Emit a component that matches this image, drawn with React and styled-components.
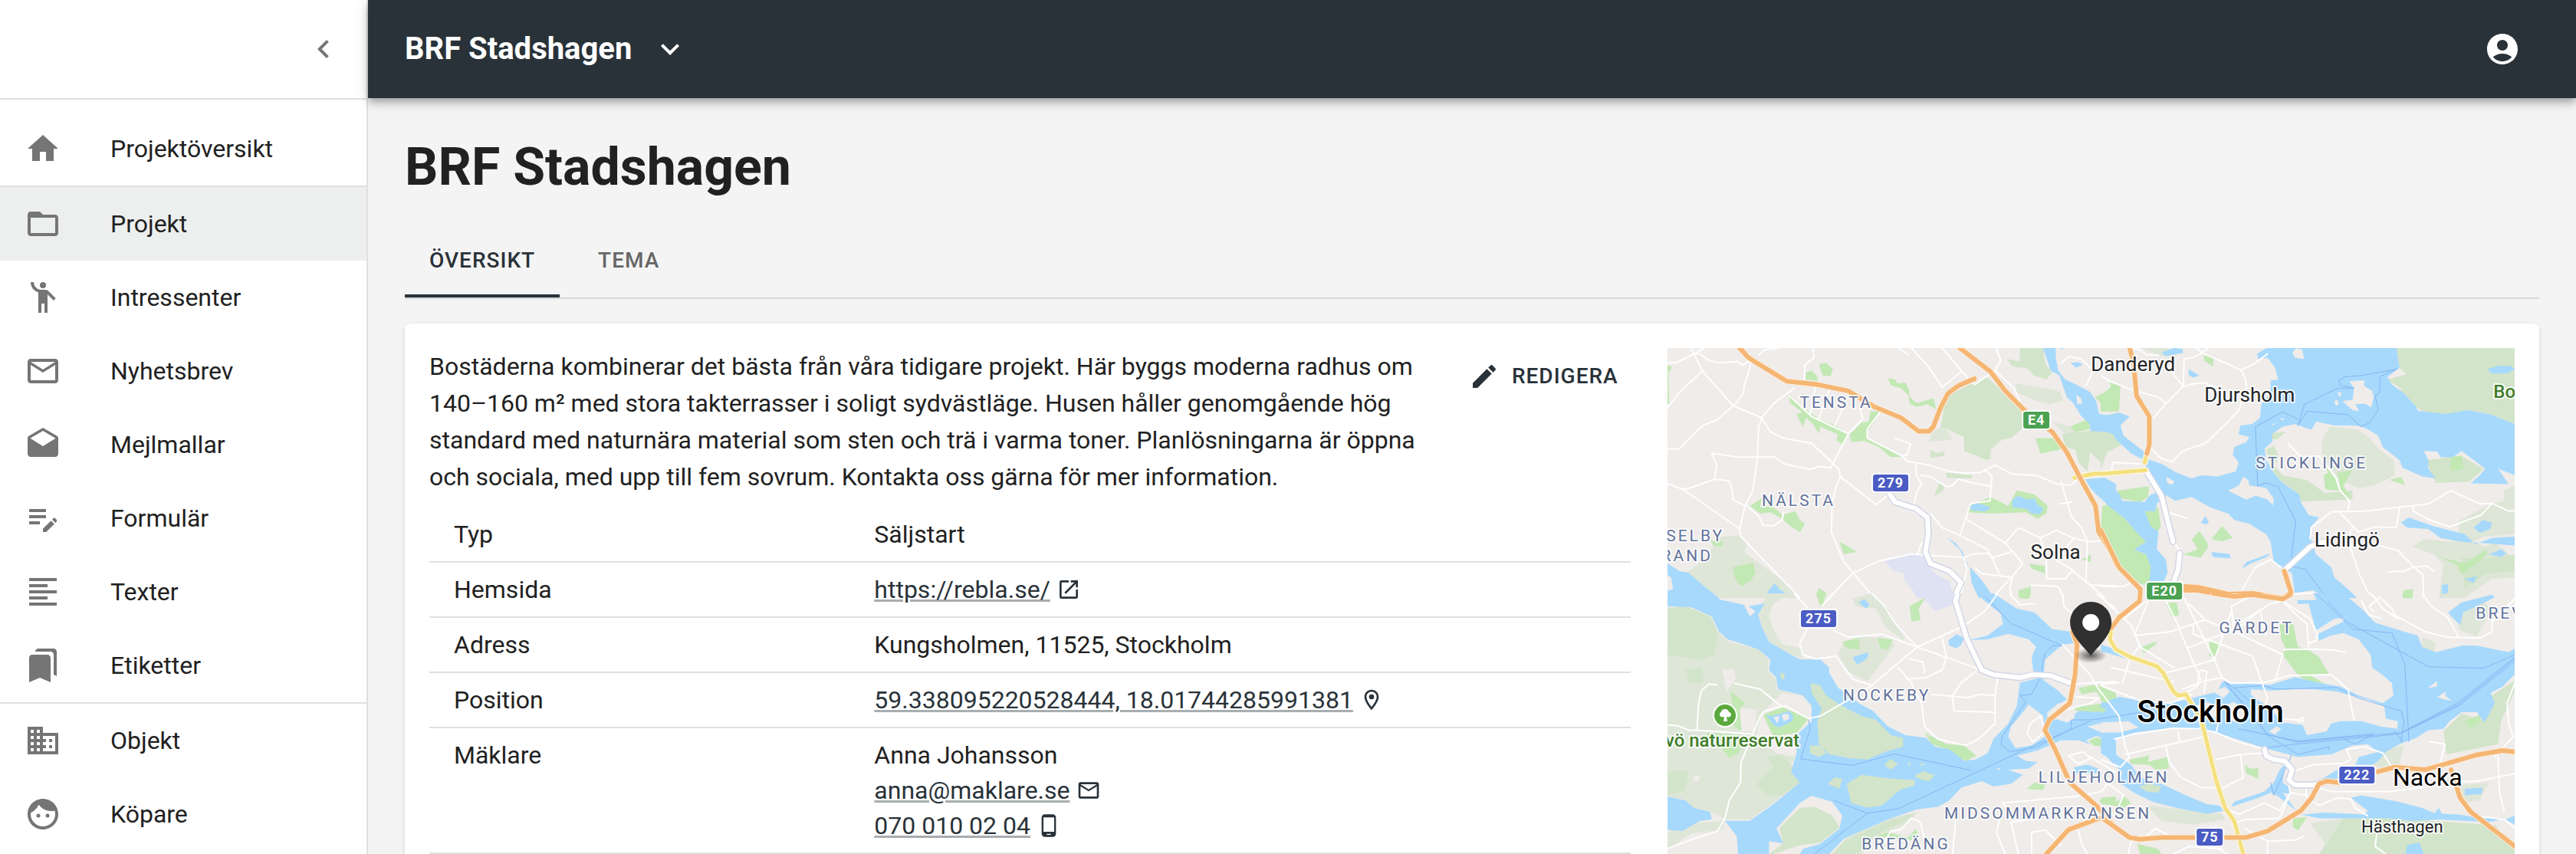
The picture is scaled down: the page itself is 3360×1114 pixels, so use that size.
import React from 'react';
import styled, { createGlobalStyle } from 'styled-components';
import {
  MdAccountCircle,
  MdBookmarks,
  MdBusiness,
  MdChevronLeft,
  MdDrafts,
  MdEdit,
  MdEditNote,
  MdEmojiPeople,
  MdExpandMore,
  MdFace,
  MdFolderOpen,
  MdFormatAlignLeft,
  MdHome,
  MdMailOutline,
  MdOpenInNew,
  MdOutlineLocationOn,
  MdPhoneAndroid,
} from 'react-icons/md';

const GlobalStyle = createGlobalStyle`
  * {
    box-sizing: border-box;
  }

  body {
    margin: 0;
    background: #f4f4f4;
    color: #212121;
    font-family: Roboto, 'Liberation Sans', sans-serif;
    font-size: 32px;
    line-height: 48px;
  }
`;

const Shell = styled.div`
  display: flex;
  height: 100vh;
  overflow: hidden;
`;

// Sidebar
const Sidebar = styled.aside`
  flex: 0 0 480px;
  background: #fff;
  border-right: 2px solid #e0e0e0;
`;

const SidebarTop = styled.div`
  display: flex;
  align-items: center;
  justify-content: flex-end;
  height: 130px;
  padding-right: 8px;
  border-bottom: 2px solid #e0e0e0;
`;

const IconButton = styled.button`
  display: flex;
  padding: 24px;
  border: 0;
  background: none;
  color: ${(props) => props.$color};
  font-size: 48px;
  cursor: pointer;
`;

const NavGroup = styled.ul`
  margin: 0;
  padding: ${(props) => (props.$first ? '16px 0 0' : '0')};
  list-style: none;
  border-bottom: ${(props) => (props.$last ? '0' : '2px solid #e0e0e0')};
`;

const NavLink = styled.a`
  display: flex;
  align-items: center;
  gap: 64px;
  height: 96px;
  padding: 0 32px;
  background: ${(props) => (props.$active ? '#edefee' : 'transparent')};
  color: #212121;
  text-decoration: none;

  svg {
    color: #757575;
    font-size: 48px;
  }
`;

// Main column
const Main = styled.div`
  flex: 1;
  min-width: 0;
`;

const Header = styled.header`
  position: relative;
  display: flex;
  align-items: center;
  justify-content: space-between;
  height: 128px;
  padding: 0 48px;
  background: #293239;
  color: #fff;
  box-shadow:
    0 4px 8px -2px rgba(0, 0, 0, 0.2),
    0 8px 10px rgba(0, 0, 0, 0.14),
    0 2px 20px rgba(0, 0, 0, 0.12);
`;

const ProjectSwitch = styled.button`
  display: flex;
  align-items: center;
  gap: 26px;
  padding: 0;
  border: 0;
  background: none;
  color: inherit;
  font: 700 40px/48px Roboto, sans-serif;
  cursor: pointer;

  svg {
    font-size: 48px;
  }
`;

const Content = styled.main`
  padding: 48px;
`;

const Title = styled.h1`
  margin: 0 0 32px;
  font-size: 68px;
  font-weight: 700;
  line-height: 84px;
`;

const Tabs = styled.div`
  display: flex;
  margin-bottom: 32px;
  border-bottom: 2px solid #d7d7d7;
`;

const Tab = styled.button`
  min-width: 180px;
  height: 96px;
  padding: 4px 32px 0;
  border: 0;
  border-bottom: 4px solid ${(props) => (props.$active ? '#293239' : 'transparent')};
  background: none;
  color: ${(props) => (props.$active ? '#293239' : '#666')};
  font: 500 28px/36px Roboto, sans-serif;
  letter-spacing: 1px;
  text-transform: uppercase;
  cursor: pointer;
`;

const Card = styled.section`
  display: grid;
  grid-template-columns: repeat(12, 1fr);
  column-gap: 48px;
  padding: 32px;
  border-radius: 8px;
  background: #fff;
  box-shadow:
    0 4px 2px -2px rgba(0, 0, 0, 0.1),
    0 2px 2px rgba(0, 0, 0, 0.08),
    0 2px 6px rgba(0, 0, 0, 0.1);
`;

const Details = styled.div`
  grid-column: span 7;
`;

const Intro = styled.div`
  display: flex;
  align-items: flex-start;
  gap: 32px;
  margin-bottom: 16px;

  p {
    flex: 1;
    margin: 0;
  }
`;

const EditButton = styled.button`
  display: flex;
  align-items: center;
  gap: 16px;
  height: 73px;
  padding: 0 16px 0 8px;
  border: 0;
  background: none;
  color: #293239;
  font: 500 28px/48px Roboto, sans-serif;
  letter-spacing: 1px;
  text-transform: uppercase;
  cursor: pointer;

  svg {
    font-size: 40px;
  }
`;

const InfoTable = styled.table`
  width: 100%;
  border-collapse: separate;
  border-spacing: 0;
  line-height: 46px;

  th,
  td {
    padding: 12px 32px;
    border-bottom: 2px solid #e0e0e0;
    font-weight: 400;
    text-align: left;
    vertical-align: top;
  }

  th {
    width: 35%;
  }
`;

const ValueLine = styled.div`
  display: flex;
  align-items: center;
  gap: 8px;
  color: #293239;

  a {
    color: inherit;
    text-decoration-color: rgba(41, 50, 57, 0.4);
    text-decoration-thickness: 3px;
    text-underline-offset: 2px;
  }
`;

// Map
const MapFrame = styled.div`
  grid-column: span 5;
  position: relative;
  overflow: hidden;
  background: #efecea;
`;

const MapCanvas = styled.svg`
  position: absolute;
  inset: 0;
  width: 100%;
  height: 100%;
`;

const Area = styled.polygon`
  fill: ${(props) => props.$fill};
`;

const Line = styled.polyline`
  fill: none;
  stroke: ${(props) => props.$color};
  stroke-width: ${(props) => props.$width}px;
  stroke-linejoin: round;
  stroke-linecap: round;
  vector-effect: non-scaling-stroke;
`;

const Place = styled.text`
  fill: ${(props) => props.$color};
  stroke: rgba(255, 255, 255, 0.8);
  stroke-width: 4px;
  stroke-linejoin: round;
  paint-order: stroke;
  font-family: Roboto, sans-serif;
  font-size: ${(props) => props.$size}px;
  font-weight: ${(props) => props.$weight || 400};
  letter-spacing: ${(props) => (props.$spaced ? '3px' : 'normal')};
`;

const ShieldText = styled.text`
  fill: #fff;
  font-family: Roboto, sans-serif;
  font-size: 18px;
  font-weight: 700;
  letter-spacing: 1px;
  text-anchor: middle;
`;

const areaLayers = [
  ['light', '#dee6d8'],
  ['wood', '#d2e4c9'],
  ['ground', '#efecea'],
  ['industry', '#dee2f3'],
  ['park', '#c2e8b4'],
  ['water', '#a7d9fc'],
  ['island', '#efecea'],
  ['islandWood', '#d2e4c9'],
  ['islandPark', '#c2e8b4'],
];

const lineLayers = [
  ['ferry', '#86b5f2', 1],
  ['road', '#fff', 2],
  ['motorway', '#d3d6e6', 9],
  ['motorway', '#fff', 6],
  ['yellow', '#fbf5df', 8],
  ['yellow', '#f4e07e', 5],
  ['orange', '#fbeee0', 8],
  ['orange', '#f5b673', 6],
];

const tiles = [
  {
    x: -15,
    y: -14,
    width: 600,
    light: [
      '220,780 285,775 312,800 300,840 370,900 430,950 490,1020 215,1020 160,970 105,920 165,870 200,810',
      '930,410 940,370 975,350 990,360 1010,400',
      '1225,180 1350,205 1375,210 1388,250 1340,262 1300,250 1230,215',
      '1350,330 1410,350 1440,370 1400,385',
    ],
    wood: [
      '1240,42 1320,42 1325,100 1350,140 1330,165 1290,150 1265,120 1215,115 1195,85 1240,95',
      '1000,225 1125,155 1180,210 1250,290 1250,355 1210,395 1180,400 1140,440 1140,475 1125,480 1085,460 1050,445 1050,390 985,355 970,355 980,290 975,265',
      '1385,380 1440,370 1560,360 1560,440 1515,455 1515,490 1480,450 1470,525 1440,490 1430,440 1395,430',
      '935,440 955,455 985,445 980,465 935,472',
      '990,530 1080,540 1075,552 990,550',
      '965,570 985,580 975,605 948,620',
    ],
    industry: ['778,877 870,850 915,850 945,920 1000,955 1015,1020 890,1020 875,990 845,950 848,925 810,915'],
    park: [
      '39,108 55,118 42,140 45,260 39,262',
      '510,140 530,130 550,155 550,172 510,165',
      '555,105 580,100 603,125 595,152 568,150',
      '455,222 490,265 555,320 610,345 655,378 640,422 615,405 620,380 560,350 555,378 535,340 512,315 500,350 478,300 500,295 455,255',
      '730,290 765,290 745,330 720,370 720,395 770,425 835,468 800,468 760,430 710,405 665,410 660,380 700,335 725,330',
      '790,160 815,165 822,180 850,178 862,205 865,235 890,258 945,238 955,282 925,262 890,272 865,262 860,225 835,200 800,188',
      '1495,235 1530,215 1568,175 1568,290 1515,290 1515,255',
      '1410,350 1475,320 1478,360 1430,370',
      '1293,395 1370,395 1378,440 1310,455',
      '1065,660 1140,625 1200,660 1230,600 1290,615 1335,660 1330,690 1300,710 1260,685 1140,690 1065,685',
      '320,660 360,630 355,665 395,660 430,695 475,680 490,715 508,730 490,762 460,740 430,710 390,685 355,690',
      '1568,660 1545,660 1520,705 1520,770 1568,830',
      '625,800 650,815 685,840 640,848',
      '262,900 330,882 340,920 325,950 290,975 270,945',
      '185,795 230,800 225,820 195,815',
      '545,1010 555,982 580,1000 575,1020',
      '1235,990 1278,975 1275,1020 1235,1015',
      '1272,885 1325,895 1325,925 1280,905',
      '1450,870 1483,850 1480,880',
    ],
    water: [
      '1318,42 1362,42 1362,75 1370,130 1395,165 1440,190 1480,215 1500,250 1510,300 1568,310 1568,400 1540,370 1480,368 1478,340 1450,310 1420,255 1400,235 1375,150 1345,130 1330,80',
      '1412,100 1440,98 1455,108 1430,118',
      '1375,42 1390,42 1384,48',
      '1462,555 1530,550 1568,575 1568,680 1540,655 1500,615 1480,590',
      '1070,660 1095,648 1140,665 1125,682 1075,677',
      '1215,635 1235,620 1265,635 1290,630 1300,655 1320,668 1310,692 1280,690 1260,670 1215,665',
      '39,885 80,915 110,920 160,970 215,1020 39,1020',
      '378,1000 405,962 420,985 450,1008 415,1005 395,1015',
      '993,785 1020,805 1045,840 1055,880 1075,905 1110,950 1140,1000 1145,1020 1100,1020 1085,985 1075,960 1070,900 1050,865 1035,830',
    ],
    island: ['1432,225 1448,238 1452,260 1436,262', '39,930 52,940 58,985 39,992'],
    road: [
      '39,100 68,100 130,65 165,42',
      '120,42 158,132 263,268 360,315 390,370 435,395 530,415 600,490 625,520 628,545 750,655 790,618',
      '130,65 150,65 180,90 210,100 278,95 295,110 320,90 322,110 300,190 298,220 265,268 205,325 160,345 115,395 80,437 39,437',
      '158,132 85,210 39,275',
      '350,70 370,50 415,42',
      '190,455 285,470 405,468 435,495 525,517 560,505 595,512',
      '190,455 207,500 200,555 105,595 90,590',
      '39,572 95,597 285,750 290,780 470,995 490,1020',
      '200,555 250,562 260,600 262,635 303,660',
      '470,200 400,260 360,315 350,350 345,480 330,600 303,660 285,750',
      '655,378 595,512',
      '310,660 350,700 365,735 400,738 430,715 435,685',
      '535,42 538,80 507,110 505,170',
      '455,230 530,310 655,378 705,320 695,280',
      '545,190 525,300',
      '590,205 555,320',
      '640,270 610,345',
      '765,290 720,360 720,395 840,465 855,485 930,500 1000,525 1050,532 1105,530 1155,500 1215,535 1295,540 1370,575 1410,580 1440,555',
      '815,395 868,418 855,460 840,465',
      '885,492 888,540 905,575 890,600 880,650',
      '900,540 935,545 990,585 1010,580 1030,555 1080,570 1138,582',
      '1120,518 1145,545 1138,640 1072,650 1055,710 1035,775',
      '628,545 610,600 600,650 598,765 640,880 672,922 715,980 740,1020',
      '590,1020 672,922 760,875 870,848 1050,862 1080,848 1130,845 1150,862 1210,840',
      '905,685 940,695 975,745 1035,775 1130,830 1170,925',
      '905,805 890,850',
      '1055,710 1190,805 1250,885 1215,935 1145,1020',
      '1190,805 1235,745 1310,785 1365,755 1420,785 1475,800 1545,795',
      '1380,565 1395,620 1415,700 1450,745 1470,800 1465,960',
      '1375,652 1415,645',
      '1310,785 1330,870 1332,945 1395,945 1420,910 1360,870 1425,785',
      '1050,865 1060,910 1040,1000',
      '1090,905 1110,925 1215,940 1205,980 1215,1020',
      '825,42 860,68',
      '870,42 925,110 975,195 1040,135',
      '975,42 1040,130 1065,165 1085,185 1155,130 1175,90 1158,42',
      '1155,130 1220,200 1255,285',
      '1380,100 1410,75 1450,85 1490,130 1465,190',
      '1415,910 1480,970 1568,972',
      '1480,970 1530,1020',
      '1280,970 1370,975 1390,1020',
    ],
    motorway: ['795,612 815,645 885,670 925,705 928,770 918,840 935,885 1000,915 1040,960 1015,1020'],
    yellow: ['1425,550 1490,535 1568,528'],
    orange: [
      '285,42 315,80 400,140 445,172 550,185 655,210 740,270 835,315 895,368 930,368 945,350 970,275 995,220 1030,190 1085,162',
      '1035,42 1140,135 1190,210 1255,285 1350,370 1400,450 1450,560 1498,660 1508,760 1550,840 1568,885',
    ],
  },
  {
    x: 565,
    y: -14,
    width: 620,
    light: [
      '135,42 220,42 250,75 200,75',
      '730,400 755,350 850,362 885,395 920,440 965,480 970,540 900,580 850,590 790,560 730,470',
      '1366,580 1330,600 1330,640 1270,660 1180,720 1180,760 1230,800 1260,780 1366,770',
      '1028,820 1065,790 1150,800 1200,790 1270,820 1300,800 1366,870 1366,940 1290,945 1200,1020 1115,1020 1130,890 1100,850',
    ],
    wood: [
      '975,42 1366,42 1366,340 1280,300 1210,285 1140,302 1060,290 1040,270 1000,220 960,210 995,205 945,165 1010,145 985,120',
      '0,370 45,380 70,420 20,450 0,520',
      '545,440 570,425 590,470 570,500 600,540 680,560 740,610 830,600 830,635 660,642 655,615 600,570 565,520',
      '560,375 610,370 580,400 560,400',
      '1075,480 1120,475 1160,465 1190,465 1262,515 1215,565 1105,570 1085,520',
      '1190,860 1240,870 1366,850 1366,915 1270,925 1200,985',
    ],
    park: [
      '5,660 20,655 80,710 115,760 150,800 110,830 150,850 165,900 185,935 160,975 120,960 75,910 0,750',
      '55,600 160,583 155,625 130,645 65,630',
      '140,685 190,665 198,740 185,765 165,740',
      '0,220 40,240 30,175 65,190 60,290 0,290',
      '340,70 372,80 370,115 340,90',
      '365,790 400,738 435,785 400,798',
      '300,790 325,760 350,800 355,820 330,862 270,850 320,830',
      '715,450 770,540 785,600 740,595 735,540 750,530',
      '780,530 830,520 800,580 825,635 790,600',
      '1155,470 1190,462 1195,515 1155,522',
      '950,558 990,548 1005,578',
      '1115,858 1200,885 1270,830 1275,850 1220,900 1190,930 1175,890',
      '998,990 1030,985 1028,1020 995,1020',
    ],
    water: [
      '548,42 975,42 985,120 945,155 960,185 995,215 1040,270 1045,288 1140,300 1210,285 1280,300 1366,340 1366,540 1310,515 1345,575 1220,572 1250,540 1268,515 1235,485 1190,445 1160,470 1120,470 1110,448 1065,445 1080,480 1080,515 1105,552 1060,545 995,510 985,480 930,430 915,385 880,360 860,350 840,345 770,345 710,330 695,362 640,340 600,350 565,378 565,410 540,435 545,480 570,530 600,570 655,615 660,645 685,695 720,705 690,745 695,800 710,850 760,900 770,940 820,990 845,1020 740,1020 700,990 640,1000 630,920 605,910 570,875 560,800 545,770 490,730 440,715 420,690 360,665 300,625 245,640 205,610 155,560 145,530 150,475 200,495 250,530 300,552 330,540 385,545 445,525 455,490 435,460 440,430 480,410 490,390 455,380 460,345 500,340 525,315 530,260 560,220 560,170 585,165 575,120 550,80 520,85 515,65',
      '0,310 60,295 95,310 65,345 75,385 145,450 150,485 100,455 50,400 40,375 0,368',
      '0,620 0,555 60,610 70,640 145,645 160,620 215,590 215,625 185,650 180,680 145,680 165,740 190,760 185,830 215,870 220,920 200,980 160,960 165,900 150,850 110,830 150,800 115,760 80,710 20,655',
      '200,60 240,42 270,45 270,62 215,74',
      '290,125 325,150 305,158 290,148',
      '1275,125 1310,112 1350,112 1366,125 1340,142 1290,142',
      '990,725 1015,705 1100,740 1200,770 1235,810 1290,785 1366,780 1366,815 1250,805 1190,800 1120,785 1080,750 1010,745',
      '1230,745 1260,715 1290,725 1285,750 1250,765',
      '365,840 425,848 428,865 370,860',
      '465,905 480,880 560,845 550,858 495,885',
      '330,725 345,700 357,725 345,732',
      '1280,850 1320,830 1338,845 1320,860',
      '1125,970 1145,965 1145,1000 1125,1005',
      '1200,945 1240,935 1230,962',
    ],
    island: [
      '420,600 455,580 470,545 487,560 490,580 545,590 570,630 568,658 550,635 510,620 480,635',
      '215,545 243,565 235,578 220,570',
      '820,172 870,168 868,190 895,210 900,235 892,275 870,260 840,262 852,290 830,285 797,250 830,245 835,200',
      '645,42 665,50 670,85 640,80 632,60',
      '770,250 780,245 785,262 775,268',
      '780,215 795,218 788,235',
      '560,345 578,335 572,343',
      '590,320 602,316 604,326',
    ],
    ferry: [
      '975,125 860,150 805,155 785,170 790,188 835,198 780,200 672,262 650,345',
      '650,320 600,292 510,350 517,580 545,570 585,585 643,720 628,860',
      '635,898 675,908 745,1020',
      '650,345 680,290 815,303 858,350 885,335 915,285 905,230 920,215 920,155 975,125',
    ],
    road: [
      '550,65 505,105 462,128 478,165 480,200 455,285 420,330 345,415 270,445 235,487 200,475 170,440',
      '462,128 410,100 360,75 335,62 300,80 275,85 272,190 215,260 175,315',
      '330,62 355,42',
      '335,62 315,42',
      '270,195 300,183 340,178 380,195',
      '0,150 30,172 90,200 190,235 215,260',
      '270,190 230,130',
      '100,42 130,50 150,68 190,70',
      '35,520 40,490 130,495',
      '690,790 695,745 760,683 870,680 985,665 1080,652 1155,600 1250,652 1290,650 1345,680 1366,678',
      '1290,650 1255,695 1150,742 1085,715 1030,680 1030,660',
      '985,665 975,745 905,742 850,762 785,682',
      '830,745 822,760 825,830 850,920 880,995 905,1020',
      '920,815 980,835 1025,890 1062,930 1065,1020',
      '1098,915 1075,895 1030,900 1000,915 950,918',
      '618,415 660,470 720,465 775,550 790,600 820,640 815,680',
      '465,990 490,940 510,900 560,870 600,905',
      '0,975 75,975 100,960',
      '220,685 285,708',
      '238,800 265,840',
      '640,1005 700,1000',
    ],
    motorway: ['148,520 200,620 238,800', '260,845 255,910 240,955', '605,912 690,820 735,800'],
    yellow: ['152,455 145,490', '0,535 95,525 148,520'],
    orange: [
      '95,42 108,100 118,230 160,310 160,420 152,455',
      '0,755 60,900 130,985 130,1020',
      '275,975 320,978 420,1005 500,1002 600,1020 628,1000 605,915',
      '275,990 320,990 430,1015',
    ],
  },
  {
    x: -15,
    y: 320,
    width: 600,
    light: [
      '39,55 100,50 190,90 210,150 250,190 300,205 350,220 385,260 380,300 410,340 410,375 480,400 530,440 530,490 480,560 480,620 455,690 495,730 400,820 320,885 240,885 180,850 130,840 100,810 39,795',
      '350,60 385,0 460,0 400,40 385,80 395,130 430,200 500,215 500,255 455,235 385,190 360,130',
      '640,190 700,170 780,175 815,200 720,345 660,310 620,240',
      '670,20 730,0 790,60 845,170 845,185 780,130 750,60 680,50',
      '600,1020 650,955 790,885 890,855 860,900 740,960 700,1020',
      '39,935 120,900 235,890 225,925 120,940 39,1000',
    ],
    wood: [
      '39,60 100,50 180,90 210,150 200,240 150,260 90,250 39,240',
      '100,300 155,290 160,350 110,350',
      '39,700 110,690 100,770 39,790',
      '340,750 400,680 380,640 430,630 480,700 490,740 430,790 380,790',
      '600,1020 650,965 790,890 880,860 850,890 740,950 690,1020',
      '240,60 290,100 265,130 240,150',
    ],
    ground: [
      '430,390 480,400 530,440 530,490 480,560 475,640 410,625 340,560 360,470',
      '225,300 265,295 272,335 240,385',
      '130,710 150,715 145,735 128,735',
      '260,470 300,450 345,455 335,540 285,540',
    ],
    industry: ['885,0 1012,0 1010,45 950,70 925,35'],
    park: [
      '365,475 430,445 520,490 480,545 400,560',
      '175,545 290,555 285,620 250,645 220,600 180,570',
      '255,385 305,430 285,450 292,540 265,520',
      '635,190 690,175 695,220 650,215',
      '755,175 808,180 790,220 765,215',
      '915,545 990,590 1050,595 1090,635 1060,655 1020,640 990,610 940,590',
      '865,50 918,15 895,60 902,105 870,110',
      '545,0 580,0 570,40 560,50',
      '1265,765 1290,740 1325,745 1320,770',
      '1440,370 1500,358 1568,390 1568,430 1530,430 1500,385 1450,395',
      '1400,450 1530,430 1525,465 1440,460',
      '750,950 790,935 860,955 885,920 890,940 870,965',
      '1510,810 1568,795 1568,830 1520,825',
      '1235,0 1275,0 1268,22 1240,20',
    ],
    water: [
      '39,0 190,0 220,25 300,45 320,90 345,65 360,130 385,190 460,240 490,258 560,258 590,290 590,310 620,370 660,400 690,430 740,460 790,520 850,555 920,565 950,600 1000,610 1050,655 1090,650 1130,625 1150,570 1200,510 1230,440 1240,350 1305,330 1285,300 1280,250 1295,210 1270,180 1200,158 1130,180 1065,183 1130,165 1182,120 1175,80 1120,30 1095,0 1150,0 1230,60 1290,75 1350,140 1415,150 1425,195 1385,200 1325,260 1320,340 1370,380 1400,415 1350,450 1330,470 1390,490 1420,480 1440,460 1530,465 1568,440 1568,650 1520,605 1440,575 1380,575 1300,615 1230,635 1260,655 1300,660 1270,685 1200,690 1250,710 1210,745 1150,755 1110,735 1040,760 1000,810 960,835 890,845 790,885 700,930 640,960 590,1020 280,1020 275,950 235,890 320,890 400,825 490,740 460,700 480,620 475,560 530,500 530,440 500,400 415,375 410,330 385,300 390,260 350,220 300,200 245,180 215,150 190,90 120,55 39,50',
      '39,795 100,810 130,840 185,855 190,885 150,890 90,930 39,925',
      '690,35 710,22 728,45 715,60',
      '670,250 725,230 720,255 685,280',
      '995,185 1025,160 1050,175 1040,200 1025,215 1000,205',
      '375,475 395,480 455,460 468,480 465,500 420,525 400,515',
      '1425,680 1470,670 1505,685 1505,705 1430,705',
      '315,50 370,40 350,80',
    ],
    island: [
      '410,920 490,820 530,792 600,815 635,870 625,920 560,980 500,1000 490,1020 385,1020 385,970 435,978',
      '1270,435 1320,480 1325,560 1280,595 1225,605 1200,560 1210,520 1240,480',
      '1330,480 1370,430 1430,440 1425,490 1400,505',
      '1465,575 1500,558 1545,575 1530,602 1490,600',
      '1470,520 1510,510 1568,505 1568,540 1520,545',
      '1160,683 1175,685 1168,692',
      '400,485 420,480 415,510',
      '428,475 450,470 455,490 435,500',
    ],
    islandWood: [
      '528,350 560,360 580,400 620,430 650,450 700,480 750,495 800,555 842,565 842,600 780,620 720,650 660,645 590,630 555,590 550,500 565,450 530,390',
      '525,595 560,595 580,625 555,640 525,625',
      '650,745 700,710 800,725 882,730 882,750 830,770 770,830 720,838 665,820',
      '585,745 610,720 635,725 625,765',
      '880,715 910,695 950,712 930,735 900,728',
      '778,670 800,648 825,668 800,690',
      '425,310 440,315 435,340 425,330',
      '420,920 490,840 540,835 600,870 625,915 560,975 490,985 400,1020 385,1020 435,978',
      '855,665 868,660 865,672',
      '898,668 915,665 910,676',
    ],
    islandPark: ['1475,577 1500,563 1540,578 1525,598 1492,596'],
    ferry: [
      '1120,10 1210,118 1385,205 1350,205 1325,235 1310,330 1280,395 1240,400 1260,425 1180,560 1175,590 1205,620 1300,600 1415,530 1415,495 1480,495 1568,485',
      '520,495 525,530 493,648 670,673 812,628 1073,692',
      '540,1020 720,860 825,843 1240,620 1480,500',
      '605,810 720,860',
    ],
    road: [
      '470,0 515,55',
      '605,0 565,50',
      '515,140 490,195 500,240 545,257 615,245 640,290 670,335 735,360',
      '605,145 655,172 770,160 890,210 1110,300',
      '735,0 775,45 820,125 890,210',
      '520,490 560,480 650,420 735,360 890,210 1045,130 1120,70 1165,0',
      '39,515 75,518 110,535 140,535 330,550 355,480 370,460 440,440 520,490',
      '330,550 290,660 288,740 250,810 235,880 210,930 130,960 39,998',
      '268,352 355,375 425,440',
      '208,358 180,355 155,380 145,430 140,530',
      '825,290 870,350 905,430 915,520 960,570 1055,595 1100,570 1155,510 1155,400 1165,325',
      '855,335 920,330 975,300 990,250 975,175',
      '865,255 910,270 915,310',
      '940,395 1060,408 1105,395 1155,400',
      '1090,305 1040,350 1010,400 1015,460 1155,465',
      '1385,200 1480,320 1568,490',
      '1425,355 1568,345',
      '1265,550 1275,510 1310,480 1325,540 1285,580 1265,550',
      '1205,0 1240,45 1290,40',
      '1385,0 1390,50 1420,80',
      '1500,0 1568,60',
      '1430,405 1510,410 1480,430 1380,460',
      '1220,870 1180,820 1425,795 1520,775 1540,740',
      '1300,880 1210,895 1235,1020',
      '1175,870 1160,935 1190,1020',
      '1022,880 1010,1020',
      '1280,1020 1280,935 1325,925 1380,985',
      '780,970 800,930 835,925 870,880 900,895 915,960',
      '1405,635 1455,620 1480,645 1440,668 1405,635',
      '1480,640 1568,700',
      '1440,930 1450,980 1470,1020',
    ],
    motorway: ['1028,0 1020,30 1060,180 1110,300 1150,318 1240,330 1285,318 1345,322 1415,352'],
    yellow: ['1568,105 1548,140 1550,190 1568,225'],
    orange: [
      '1420,150 1435,200 1428,320 1410,430 1340,495 1325,535 1360,610 1410,740 1500,830 1568,920',
      '1330,1020 1405,925 1510,880',
    ],
  },
  {
    x: 565,
    y: 320,
    width: 620,
    light: [
      '150,830 400,862 410,885 300,905 200,890',
      '1190,60 1260,30 1290,60 1240,170 1180,140',
      '1060,170 1105,195 1100,230 1060,210',
      '895,660 960,600 1000,600 980,680 900,680',
      '1180,750 1280,740 1250,810 1190,820',
      '690,900 800,880 720,1020 740,980',
    ],
    wood: [
      '1130,540 1190,470 1265,500 1290,400 1366,340 1366,380 1320,500 1310,590 1140,630',
      '740,985 800,880 960,880 1366,912 1366,1020 720,1020',
    ],
    ground: ['1300,900 1366,915 1366,990 1330,960'],
    park: [
      '590,120 635,120 650,210 690,225 720,250 752,315 690,320 740,355 680,345 650,320 600,240 610,215 595,180',
      '215,40 250,35 258,85 235,92',
      '360,185 398,195 380,252 357,245',
      '135,210 185,188 180,200 140,235',
      '95,650 160,635 155,660 220,640 225,685 180,690 160,670 100,668',
      '475,670 490,685 520,685 518,725 480,705',
      '635,880 680,875 650,928 632,910',
      '120,980 190,1000 200,1020 130,1020',
      '1200,500 1250,475 1255,500 1220,530',
      '0,800 45,795 50,815 80,795 100,820 75,840 0,820',
      '996,0 1028,0 1028,20 996,18',
    ],
    water: [
      '700,0 800,0 860,60 905,115 1000,150 1045,165 1060,210 1105,230 1190,205 1240,205 1345,230 1366,215 1366,315 1325,365 1285,390 1300,430 1265,505 1240,465 1190,465 1150,500 1130,530 1080,535 1040,565 985,590 940,620 920,650 895,672 840,670 850,640 915,620 880,590 830,595 760,630 650,640 540,605 460,575 370,540 240,525 110,545 40,575 0,580 0,430 60,405 130,420 230,430 300,410 385,385 400,345 430,352 560,358 640,328 720,350 790,365 850,400 930,430 965,400 960,350 930,320 895,290 890,240 850,180 800,155 760,165 720,185 715,160 800,110 805,95 770,100 710,145 685,40 650,42 648,26 712,26',
      '0,580 45,570 35,610 60,640 100,670 130,720 200,745 280,790 350,825 390,830 410,850 350,862 250,840 170,815 110,780 60,740 70,700 20,640 0,625',
      '430,835 440,815 540,775 570,740 590,690 625,650 605,690 600,740 625,760 625,785 600,780 645,850 580,790 560,780 520,800',
      '660,865 740,858 870,865 880,850 825,800 860,790 980,815 1060,840 1100,860 1115,840 1125,862 1180,865 1260,880 1330,880 1280,895 1120,885 1020,890 950,880 720,880',
      '710,740 780,690 790,720 750,735',
      '1200,765 1260,760 1255,785 1200,790',
      '1366,868 1335,885 1366,905',
      '1010,985 1050,975 1065,1020 1005,1020',
      '1145,75 1190,35 1290,5 1300,15 1240,50 1195,75 1185,125 1160,95',
      '0,200 40,215 85,255 40,240 0,225',
    ],
    island: [
      '495,375 560,380 640,375 700,375 780,385 810,395 880,415 935,440 940,490 980,500 978,530 920,520 860,500 790,500 760,510 745,540 680,555 665,515 600,505 550,440 520,420 495,395',
      '400,440 440,425 480,460 470,500 430,500',
      '555,540 580,520 595,530 575,552',
      '310,440 350,425 385,440 395,480 350,490',
      '0,505 90,500 125,525 60,545 0,545',
      '1078,370 1110,343 1108,365',
      '1110,405 1140,383 1135,400 1158,420 1130,415',
      '370,385 410,365 425,385 405,410',
    ],
    islandWood: ['125,755 160,745 200,755 190,780 150,775'],
    islandPark: ['0,380 45,400 20,430 0,420', '0,445 20,455 0,470'],
    ferry: [
      '710,0 830,140 960,155 1003,280 1016,580',
      '750,30 810,110 1080,287 1262,293 1366,240',
      '1366,250 1175,430 990,545 645,582 545,550 408,345',
      '1366,265 1180,440 985,550 640,590 540,605',
      '1366,255 1178,436 988,548',
      '408,345 520,500 555,560 650,630 755,600 750,610',
      '440,370 530,360 580,375 780,368 850,410 990,460 1000,500 990,580',
      '408,345 440,370 490,420',
      '0,490 120,468 210,470',
      '455,530 650,578 900,550 840,590 800,570',
      '630,630 570,790 560,740',
      '970,540 995,580',
    ],
    road: [
      '0,15 55,75 100,125 130,210 240,290',
      '155,35 110,165 230,150 340,105',
      '150,30 75,100',
      '215,30 245,100 330,340',
      '275,20 375,260 400,330 430,352',
      '290,40 345,105 440,150 600,240',
      '305,120 305,160 500,245 550,410 540,440',
      '490,15 430,50 440,150 525,65 545,165',
      '450,120 560,40 600,30 650,90 680,120 685,210',
      '600,30 690,100 715,160 710,185 685,195',
      '600,240 575,340',
      '430,352 545,348 620,322 760,318 815,375 835,495',
      '605,220 700,218 770,222 808,232',
      '430,70 375,260 285,290 215,310',
      '285,215 400,160',
      '35,290 160,325 240,345',
      '70,355 75,335 95,260 130,200',
      '0,355 60,350',
      '330,300 350,305 340,390',
      '280,390 320,360 325,300',
      '270,375 350,340 400,330',
      '0,360 130,420 230,430 300,395',
      '0,385 60,480 80,600 95,640 65,680 0,650',
      '45,570 110,550 240,528 330,530 380,545 450,580 540,610',
      '80,630 345,560',
      '255,540 260,580',
      '215,600 225,660 265,720 330,760 405,760 470,720 460,630 535,625',
      '380,650 460,630',
      '380,545 390,500',
      '90,1020 100,970 140,960 180,920 240,955',
      '20,740 75,790 60,830',
      '410,840 455,865 540,820 590,850 625,780 620,755',
      '430,905 475,885 590,880 625,780 680,790',
      '475,920 550,970 640,965 670,950',
      '550,970 550,1020',
      '380,910 370,990 420,1020',
      '240,1020 290,990 400,1000',
      '675,755 680,800 720,830 780,800 825,805 840,840 880,870',
      '700,755 760,775 950,775 1060,760',
      '630,700 700,670 800,665 825,650 810,610 870,600 930,625 960,680',
      '1085,580 1135,590 1120,660',
      '1180,738 1240,735 1366,705',
      '1310,640 1315,780 1330,850',
      '1240,870 1330,885 1366,920',
      '1366,350 1340,430 1345,510 1360,560 1300,640',
      '900,10 930,60 980,100 960,60 920,15 885,50 900,75',
      '860,30 885,85 925,98',
      '1060,0 1090,50 1145,95 1180,172',
      '960,80 1070,150 1145,172 1250,175 1290,150 1290,110 1366,20',
      '910,940 905,990 940,1020',
      '600,490 650,495 665,485 670,500 650,500',
    ],
    motorway: ['540,610 545,635 570,650 605,655 632,690 620,730 640,750 700,750 735,738'],
    yellow: [
      '35,135 30,180 50,220 100,250 185,285 205,310 240,385 255,400 280,395 330,490 345,560 380,730 410,840 440,890 470,1020',
    ],
    orange: [
      '130,0 128,30 60,95 35,135',
      '370,0 440,12 500,5 600,22 625,5',
      '0,875 95,955 130,962 200,955 480,955 550,930 660,850 695,800 720,745 745,735 785,740',
      '905,700 970,680 1070,690 1240,632 1325,615 1366,620',
      '1155,690 1185,800 1220,855 1366,990',
    ],
  },
];

const district = { $color: '#62739c', $size: 21, $spaced: true };
const town = { $color: '#212326', $size: 26 };
const reserve = { $color: '#3f7e2a', $size: 24, $weight: 500 };

const places = [
  { name: 'TENSTA', x: 220, y: 78, ...district },
  { name: 'NÄLSTA', x: 171, y: 206, ...district },
  { name: 'HÄSSELBY', x: 74, y: 252, anchor: 'end', ...district },
  { name: 'STRAND', x: 59, y: 278, anchor: 'end', ...district },
  { name: 'STICKLINGE', x: 840, y: 157, ...district },
  { name: 'NOCKEBY', x: 286, y: 460, ...district },
  { name: 'GÄRDET', x: 768, y: 372, ...district },
  { name: 'BREVIK', x: 1054, y: 353, anchor: 'start', ...district },
  { name: 'LILJEHOLMEN', x: 569, y: 567, ...district },
  { name: 'MIDSOMMARKRANSEN', x: 496, y: 614, ...district },
  { name: 'BREDÄNG', x: 311, y: 654, ...district },
  { name: 'Danderyd', x: 607, y: 30, ...town },
  { name: 'Djursholm', x: 759, y: 70, ...town },
  { name: 'Solna', x: 506, y: 275, ...town },
  { name: 'Lidingö', x: 886, y: 259, ...town },
  { name: 'Hästhagen', x: 958, y: 632, ...town, $size: 22 },
  { name: 'Nacka', x: 991, y: 571, $color: '#000', $size: 32 },
  { name: 'Stockholm', x: 708, y: 488, $color: '#000', $size: 40, $weight: 500 },
  { name: 'Bogesund', x: 1077, y: 65, anchor: 'start', ...reserve },
  { name: 'Lovö naturreservat', x: 172, y: 520, anchor: 'end', ...reserve },
];

const shields = [
  { name: 'E4', x: 463, y: 82, width: 36, color: '#4ba252' },
  { name: 'E20', x: 624, y: 305, width: 48, color: '#4ba252' },
  { name: '279', x: 267, y: 164, width: 48, color: '#4b5cc4' },
  { name: '275', x: 173, y: 341, width: 48, color: '#4b5cc4' },
  { name: '222', x: 875, y: 545, width: 48, color: '#4b5cc4' },
  { name: '75', x: 689, y: 626, width: 36, color: '#4b5cc4' },
];

const Tile = ({ tile }) => (
  <svg
    x={tile.x}
    y={tile.y}
    width={tile.width}
    height={340}
    viewBox="0 0 1568 1020"
    preserveAspectRatio="none"
  >
    {areaLayers.map(([kind, fill]) =>
      (tile[kind] || []).map((points) => <Area key={kind + points} points={points} $fill={fill} />)
    )}
    {lineLayers.map(([kind, color, width]) =>
      (tile[kind] || []).map((points) => (
        <Line key={kind + width + points} points={points} $color={color} $width={width} />
      ))
    )}
  </svg>
);

const ProjectMap = () => (
  <MapFrame>
    <MapCanvas viewBox="0 0 1105 660" preserveAspectRatio="xMidYMid slice" role="img" aria-label="Karta">
      <defs>
        <radialGradient id="pin-shadow">
          <stop offset="0" stopColor="#000" stopOpacity="0.6" />
          <stop offset="1" stopColor="#000" stopOpacity="0" />
        </radialGradient>
      </defs>

      {tiles.map((tile) => (
        <Tile key={`${tile.x}:${tile.y}`} tile={tile} />
      ))}

      {shields.map(({ name, x, y, width, color }) => (
        <g key={name}>
          <rect x={x} y={y} width={width} height={24} rx={4} fill={color} stroke="#fff" strokeWidth={2} />
          <ShieldText x={x + width / 2} y={y + 18}>
            {name}
          </ShieldText>
        </g>
      ))}

      {places.map(({ name, x, y, anchor, ...look }) => (
        <Place key={name} x={x} y={y} textAnchor={anchor || 'middle'} {...look}>
          {name}
        </Place>
      ))}

      {/* Nature reserve badge */}
      <circle cx="75" cy="479" r="15" fill="#5aa93c" stroke="#fff" strokeWidth="2" />
      <path
        d="M73 487l1-6c-3 1-6 0-6-3 0-2 1-3 2-3 0-3 3-4 5-4 3 0 5 2 5 4 2 0 3 2 3 3 0 3-3 4-6 3l1 6z"
        fill="#fff"
      />

      <ellipse cx="552" cy="401" rx="21" ry="10" fill="url(#pin-shadow)" />
      <path
        d="M552 331c-15 0-27 12-27 27 0 14 11 25 27 43 16-18 27-29 27-43 0-15-12-27-27-27z"
        fill="#303030"
      />
      <circle cx="552" cy="358" r="11" fill="#fff" />
    </MapCanvas>
  </MapFrame>
);

const navGroups = [
  [{ label: 'Projektöversikt', icon: MdHome }],
  [
    { label: 'Projekt', icon: MdFolderOpen, active: true },
    { label: 'Intressenter', icon: MdEmojiPeople },
    { label: 'Nyhetsbrev', icon: MdMailOutline },
    { label: 'Mejlmallar', icon: MdDrafts },
    { label: 'Formulär', icon: MdEditNote },
    { label: 'Texter', icon: MdFormatAlignLeft },
    { label: 'Etiketter', icon: MdBookmarks },
  ],
  [
    { label: 'Objekt', icon: MdBusiness },
    { label: 'Köpare', icon: MdFace },
  ],
];

const rows = [
  { label: 'Typ', lines: [{ text: 'Säljstart' }] },
  { label: 'Hemsida', lines: [{ text: 'https://rebla.se/', href: 'https://rebla.se/', icon: MdOpenInNew }] },
  { label: 'Adress', lines: [{ text: 'Kungsholmen, 11525, Stockholm' }] },
  {
    label: 'Position',
    lines: [{ text: '59.338095220528444, 18.01744285991381', href: '#karta', icon: MdOutlineLocationOn }],
  },
  {
    label: 'Mäklare',
    lines: [
      { text: 'Anna Johansson' },
      { text: 'anna@maklare.se', href: 'mailto:anna@maklare.se', icon: MdMailOutline },
      { text: '070 010 02 04', href: 'tel:0700100204', icon: MdPhoneAndroid },
    ],
  },
];

const App = () => {
  return (
    <>
      <GlobalStyle />
      <Shell>
        <Sidebar>
          <SidebarTop>
            <IconButton $color="#757575" aria-label="Dölj meny">
              <MdChevronLeft />
            </IconButton>
          </SidebarTop>
          <nav>
            {navGroups.map((group, i) => (
              <NavGroup key={group[0].label} $first={i === 0} $last={i === navGroups.length - 1}>
                {group.map(({ label, icon: Icon, active }) => (
                  <li key={label}>
                    <NavLink href="#" $active={active}>
                      <Icon />
                      {label}
                    </NavLink>
                  </li>
                ))}
              </NavGroup>
            ))}
          </nav>
        </Sidebar>

        <Main>
          <Header>
            <ProjectSwitch>
              BRF Stadshagen
              <MdExpandMore />
            </ProjectSwitch>
            <IconButton $color="#fff" aria-label="Konto">
              <MdAccountCircle />
            </IconButton>
          </Header>

          <Content>
            <Title>BRF Stadshagen</Title>
            <Tabs role="tablist">
              <Tab role="tab" aria-selected="true" $active>
                Översikt
              </Tab>
              <Tab role="tab" aria-selected="false">
                Tema
              </Tab>
            </Tabs>

            <Card>
              <Details>
                <Intro>
                  <p>
                    Bostäderna kombinerar det bästa från våra tidigare projekt. Här byggs moderna radhus
                    om 140–160 m² med stora takterrasser i soligt sydvästläge. Husen håller genomgående
                    hög standard med naturnära material som sten och trä i varma toner. Planlösningarna är
                    öppna och sociala, med upp till fem sovrum. Kontakta oss gärna för mer information.
                  </p>
                  <EditButton>
                    <MdEdit />
                    Redigera
                  </EditButton>
                </Intro>

                <InfoTable>
                  <tbody>
                    {rows.map(({ label, lines }) => (
                      <tr key={label}>
                        <th scope="row">{label}</th>
                        <td>
                          {lines.map(({ text, href, icon: Icon }) =>
                            href ? (
                              <ValueLine key={text}>
                                <a href={href}>{text}</a>
                                <Icon />
                              </ValueLine>
                            ) : (
                              <div key={text}>{text}</div>
                            )
                          )}
                        </td>
                      </tr>
                    ))}
                  </tbody>
                </InfoTable>
              </Details>

              <ProjectMap />
            </Card>
          </Content>
        </Main>
      </Shell>
    </>
  );
};

export default App;
